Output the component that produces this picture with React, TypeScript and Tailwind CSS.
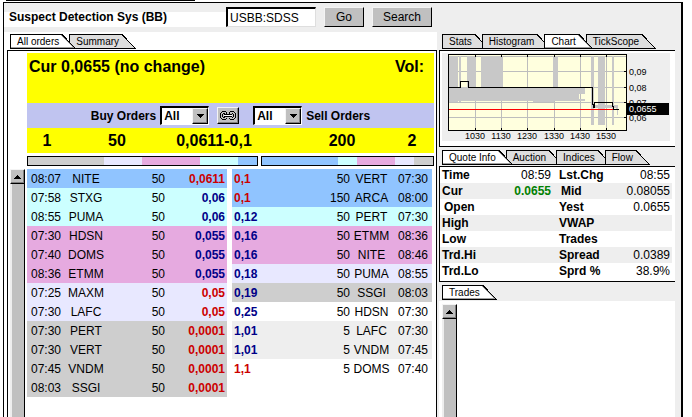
import { useState } from "react";
import clsx from "clsx";

type Order = { time: string; maker: string; size: number; price: string; row: string; down?: boolean };

const BLUE = "bg-[#90c4ff]";
const CYAN = "bg-[#ccffff]";
const PINK = "bg-[#e6aae0]";
const LILAC = "bg-[#e8e8ff]";
const GRAY = "bg-[#cecece]";
const LIGHT = "bg-[#eeeeee]";
const WHITE = "bg-white";

const BUY_ORDERS: Order[] = [
  { time: "08:07", maker: "NITE", size: 50, price: "0,0611", row: BLUE, down: true },
  { time: "07:58", maker: "STXG", size: 50, price: "0,06", row: CYAN },
  { time: "08:55", maker: "PUMA", size: 50, price: "0,06", row: CYAN },
  { time: "07:30", maker: "HDSN", size: 50, price: "0,055", row: PINK },
  { time: "07:40", maker: "DOMS", size: 50, price: "0,055", row: PINK },
  { time: "08:36", maker: "ETMM", size: 50, price: "0,055", row: PINK },
  { time: "07:25", maker: "MAXM", size: 50, price: "0,05", row: LILAC, down: true },
  { time: "07:30", maker: "LAFC", size: 50, price: "0,05", row: LILAC, down: true },
  { time: "07:30", maker: "PERT", size: 50, price: "0,0001", row: GRAY, down: true },
  { time: "07:30", maker: "VERT", size: 50, price: "0,0001", row: GRAY, down: true },
  { time: "07:45", maker: "VNDM", size: 50, price: "0,0001", row: GRAY, down: true },
  { time: "08:03", maker: "SSGI", size: 50, price: "0,0001", row: GRAY, down: true },
];

const SELL_ORDERS: Order[] = [
  { time: "07:30", maker: "VERT", size: 50, price: "0,1", row: BLUE, down: true },
  { time: "08:00", maker: "ARCA", size: 150, price: "0,1", row: BLUE, down: true },
  { time: "07:30", maker: "PERT", size: 50, price: "0,12", row: CYAN },
  { time: "08:36", maker: "ETMM", size: 50, price: "0,16", row: PINK },
  { time: "08:46", maker: "NITE", size: 50, price: "0,16", row: PINK },
  { time: "08:55", maker: "PUMA", size: 50, price: "0,18", row: LILAC },
  { time: "08:03", maker: "SSGI", size: 50, price: "0,19", row: GRAY },
  { time: "07:30", maker: "HDSN", size: 50, price: "0,25", row: WHITE },
  { time: "07:30", maker: "LAFC", size: 5, price: "1,01", row: LIGHT },
  { time: "07:45", maker: "VNDM", size: 5, price: "1,01", row: LIGHT },
  { time: "07:40", maker: "DOMS", size: 5, price: "1,1", row: WHITE, down: true },
];

const BUY_DEPTH = [
  { color: GRAY, weight: 4 },
  { color: LILAC, weight: 2 },
  { color: PINK, weight: 3 },
  { color: CYAN, weight: 2 },
  { color: BLUE, weight: 1 },
];

const SELL_DEPTH = [
  { color: BLUE, weight: 4 },
  { color: CYAN, weight: 1 },
  { color: PINK, weight: 2 },
  { color: LILAC, weight: 1 },
  { color: GRAY, weight: 1 },
];

const QUOTE_ROWS = [
  ["Time", "08:59", "Lst.Chg", "08:55"],
  ["Cur", "0.0655", "Mid", "0.08055"],
  ["Open", "", "Yest", "0.0655"],
  ["High", "", "VWAP", ""],
  ["Low", "", "Trades", ""],
  ["Trd.Hi", "", "Spread", "0.0389"],
  ["Trd.Lo", "", "Sprd %", "38.9%"],
];

const RAISED = "border border-t-[#f4f4f4] border-l-[#f4f4f4] border-r-black border-b-black bg-[#c0c0c0]";
const BEVEL = "shadow-[inset_-1px_-1px_0_#808080]";

// Tabs with a slanted right edge; each one tucks under or over its neighbour
function Tabs({ items, initial }: { items: string[]; initial: number }) {
  const [active, setActive] = useState(initial);
  return (
    <div className="isolate flex h-[15px]" role="tablist">
      {items.map((label, i) => (
        <button
          key={label}
          type="button"
          role="tab"
          aria-selected={i === active}
          onClick={() => setActive(i)}
          className={clsx("relative flex h-[15px] text-[10px] leading-[13px]", i > 0 && "-ml-[7px]", i === active && "z-10")}
        >
          <span
            className={clsx(
              "h-[15px] border-y border-l border-black pr-0.5 pl-1.5",
              i === active ? "bg-white shadow-[inset_0_-1px_0_#a0a0a0]" : "bg-[#dedede]",
            )}
          >
            {label}
          </span>
          <svg width="15" height="15" viewBox="0 0 15 15" shapeRendering="crispEdges" aria-hidden="true">
            <path d="M0 0H1L15 15H0Z" fill={i === active ? "#fff" : "#dedede"} />
            {i === active && <path d="M0 13.5H12.5L0.5 1.5" fill="none" stroke="#a0a0a0" />}
            <path d="M0 .5H1L14.5 14.5H0" fill="none" stroke="#000" />
          </svg>
        </button>
      ))}
    </div>
  );
}

function ScrollBar() {
  return (
    <div className="flex w-[15px] shrink-0 flex-col">
      <button type="button" aria-label="Scroll up" className={clsx("flex h-[15px] items-center justify-center", RAISED, BEVEL)}>
        <svg width="7" height="4" viewBox="0 0 7 4" shapeRendering="crispEdges" aria-hidden="true">
          <path d="M3 0h1v1h1v1h1v1h1v1H0V3h1V2h1V1h1z" />
        </svg>
      </button>
      <div className="grow border-r border-l-2 border-l-[#eeeeee] border-r-black bg-[#c0c0c0]" />
    </div>
  );
}

function FilterSelect({ label }: { label: string }) {
  return (
    <div className="relative h-[19px] w-[49px]">
      <select
        aria-label={label}
        className="h-full w-full appearance-none border-t-2 border-r border-b border-l-2 border-t-black border-r-white border-b-white border-l-black bg-white pl-0.5 text-xs leading-none font-bold"
      >
        <option>All</option>
      </select>
      <span
        className={clsx(
          "pointer-events-none absolute top-0.5 right-px bottom-px flex w-4 items-center justify-center",
          RAISED,
          BEVEL,
        )}
      >
        <svg width="7" height="4" viewBox="0 0 7 4" shapeRendering="crispEdges" aria-hidden="true">
          <path d="M0 0h7v1H6v1H5v1H4v1H3V3H2V2H1V1H0z" />
        </svg>
      </span>
    </div>
  );
}

function DepthBar({ segments }: { segments: { color: string; weight: number }[] }) {
  return (
    <div className="flex h-2.5 w-full border border-black">
      {segments.map((s) => (
        <div key={s.color} className={s.color} style={{ flexGrow: s.weight }} />
      ))}
    </div>
  );
}

function priceColor(o: Order) {
  return o.down ? "text-[#cc0000]" : "text-[#000088]";
}

function BuyTable() {
  return (
    <table className="w-1/2 table-fixed self-start" aria-label="Buy Orders">
      <tbody>
        {BUY_ORDERS.map((o) => (
          <tr key={o.time + o.maker} className={clsx("h-[19px]", o.row)}>
            <td className="w-[39px] pl-1">{o.time}</td>
            <td className="w-10 text-center">{o.maker}</td>
            <td className="text-right">{o.size}</td>
            <td className={clsx("w-[62px] pr-0.5 text-right font-bold", priceColor(o))}>{o.price}</td>
          </tr>
        ))}
      </tbody>
    </table>
  );
}

function SellTable() {
  return (
    <table className="w-1/2 table-fixed self-start" aria-label="Sell Orders">
      <tbody>
        {SELL_ORDERS.map((o) => (
          <tr key={o.time + o.maker} className={clsx("h-[19px]", o.row)}>
            <td className={clsx("w-[62px] pl-0.5 font-bold", priceColor(o))}>{o.price}</td>
            <td className="text-right">{o.size}</td>
            <td className="w-[43px] text-center">{o.maker}</td>
            <td className="w-[39px] pr-1 text-right">{o.time}</td>
          </tr>
        ))}
      </tbody>
    </table>
  );
}

function PriceChart() {
  return (
    <svg
      viewBox="0 0 228 88"
      className="block h-[88px] w-[228px] bg-[#eeeeee] text-[9px]"
      shapeRendering="crispEdges"
      role="img"
      aria-label="Price chart"
    >
      <rect x="6" y="1" width="179" height="76" fill="#ffffde" />
      <g stroke="#bdbdbd">
        <path d="M7 18.5h177M7 34.5h177M7 49.5h177M7 64.5h177M7 3.5h177" />
        <path d="M33.5 2v75M59.5 2v75M85.5 2v75M112.5 2v75M138.5 2v75M164.5 2v75" />
      </g>
      <g fill="#c8c8c8">
        <path d="M7 3h9v31h1V3h2v31h6V3h9v31h5V3h22v31h50V3h5v31h27v7h-6v5h6v2h-31v1H91v-1H19v1h-2v-1h-1v1H7z" />
        <path d="M149 3h3v69h-3zM156 3h7v69h-7zM170 3h2v69h-2zM152 52h23v3h-23zM174 52h2v10h-1z" />
      </g>
      <path d="M7 56.5h167" stroke="#ff0000" />
      <path d="M7 34.5h11.5v-6h8v6h124v17h1v3h1v-5h18v4h1v3h5" fill="none" stroke="#000" />
      <rect x="6.5" y="1.5" width="178" height="76" fill="none" stroke="#000" />
      <path
        d="M33.5 2v2M59.5 2v2M85.5 2v2M112.5 2v2M138.5 2v2M164.5 2v2M33.5 75v2M59.5 75v2M85.5 75v2M112.5 75v2M138.5 75v2M164.5 75v2M182 18.5h2M182 34.5h2M182 49.5h2M182 64.5h2"
        stroke="#000"
      />
      <g>
        <text x="187" y="22">0,09</text>
        <text x="187" y="38">0,08</text>
        <text x="187" y="53">0,07</text>
        <text x="187" y="68">0,06</text>
      </g>
      <rect x="185" y="50" width="42" height="12" />
      <text x="187" y="59" fill="#fff">
        0,0655
      </text>
      <g textAnchor="middle">
        <text x="33" y="86">1030</text>
        <text x="59" y="86">1130</text>
        <text x="85" y="86">1230</text>
        <text x="112" y="86">1330</text>
        <text x="138" y="86">1430</text>
        <text x="164" y="86">1530</text>
      </g>
    </svg>
  );
}

function QuoteTable() {
  return (
    <table className="w-full table-fixed leading-4">
      <tbody>
        {QUOTE_ROWS.map(([label, value, label2, value2], i) => (
          <tr key={label} className={clsx("h-4", i % 2 === 1 && LIGHT)}>
            <th className={clsx("w-[46px] text-left", label === "Open" ? "pl-1" : "pl-0.5")}>{label}</th>
            <td className={clsx("w-[65px] text-right", label === "Cur" && "font-bold text-[#008000]")}>{value}</td>
            <th className={clsx("w-[60px] text-left", label2 === "Mid" ? "pl-2.5" : "pl-2")}>{label2}</th>
            <td className="pr-0.5 text-right">{value2}</td>
          </tr>
        ))}
      </tbody>
    </table>
  );
}

export default function App() {
  return (
    <div className="flex min-h-screen flex-col bg-white pr-[9px] pl-[3px] font-['Liberation_Sans',Arial,sans-serif] text-xs text-black">
      <div className="ml-[3px] h-px w-[189px] bg-black" />
      <main className="mt-px flex grow flex-col border-t border-r-2 border-l border-black bg-[#eeeeee]">
        <form className="flex h-[29px] items-start pt-1" onSubmit={(e) => e.preventDefault()}>
          <label
            htmlFor="symbol"
            className="mt-[5px] h-[15px] w-[222px] bg-white pl-[5px] leading-[10px] font-bold whitespace-nowrap"
          >
            Suspect Detection Sys (BB)
          </label>
          <input
            id="symbol"
            defaultValue="USBB:SDSS"
            className="h-5 w-[90px] border-t-2 border-r border-b border-l-2 border-t-black border-r-[#dedede] border-b-[#dedede] border-l-black bg-white pl-0.5"
          />
          <button type="submit" className={clsx("ml-2 h-5 w-10", RAISED)}>
            Go
          </button>
          <button type="button" className={clsx("ml-2 h-5 w-[60px]", RAISED)}>
            Search
          </button>
        </form>

        <div className="flex grow">
          <section className="flex min-w-0 grow flex-col bg-white pl-[3px]">
            <div className="h-[18px] pt-0.5 pl-[3px]">
              <Tabs items={["All orders", "Summary"]} initial={0} />
            </div>
            <div className="flex grow flex-col border-t border-r border-l border-black pt-0.5 pr-0.5">
              <div className="ml-[19px]">
                <div className="flex h-[50px] justify-between bg-[#ffff00] px-0.5 pt-1 text-base leading-5 font-bold">
                  <h1>Cur 0,0655 (no change)</h1>
                  <span className="pr-2">Vol:</span>
                </div>
                <div className="flex h-[25px] items-center justify-center bg-[#c0c4f0] font-bold">
                  <span className="mr-1">Buy Orders</span>
                  <FilterSelect label="Buy orders filter" />
                  <button
                    type="button"
                    aria-label="Link filters"
                    className={clsx("mr-3.5 ml-2 flex h-[17px] w-[22px] items-center justify-center", RAISED, BEVEL)}
                  >
                    <svg width="16" height="11" viewBox="0 0 16 11" fill="none" shapeRendering="crispEdges" aria-hidden="true">
                      <path d="M6.5 3.5v-1l-1-1h-3l-2 2v4l2 2h3l1-1v-1M9.5 3.5v-1l1-1h3l2 2v4l-2 2h-3l-1-1v-1" stroke="#000" />
                      <path d="M4.5 3.5h-1l-1 1v2l1 1h1M11.5 3.5h1l1 1v2l-1 1h-1" stroke="#000" />
                      <path d="M4 5.5h8" stroke="#fff" />
                      <path d="M4 4.5h8M4 6.5h8" stroke="#000" />
                    </svg>
                  </button>
                  <FilterSelect label="Sell orders filter" />
                  <span className="ml-1">Sell Orders</span>
                </div>
                <div className="flex h-[25px] items-center bg-[#ffff00] pr-0.5 text-center text-base font-bold">
                  <span className="w-10">1</span>
                  <span className="w-[100px]">50</span>
                  <span className="w-[94px]">0,0611-0,1</span>
                  <span className="ml-auto w-[100px]">200</span>
                  <span className="w-10">2</span>
                </div>
                <div className="grid grid-cols-[4fr_3fr] gap-[3px] py-[3px]">
                  <DepthBar segments={BUY_DEPTH} />
                  <DepthBar segments={SELL_DEPTH} />
                </div>
              </div>
              <div className="flex grow pl-0.5">
                <ScrollBar />
                <div className="ml-0.5 flex min-w-0 grow gap-[5px] pr-0.5">
                  <BuyTable />
                  <SellTable />
                </div>
              </div>
            </div>
          </section>

          <aside className="flex w-[244px] shrink-0 flex-col pr-1.5 pl-0.5">
            <div className="h-[18px] pt-0.5 pl-[3px]">
              <Tabs items={["Stats", "Histogram", "Chart", "TickScope"]} initial={2} />
            </div>
            <div className="h-[97px] border-y border-l border-black bg-white pt-0.5 pl-0.5">
              <PriceChart />
            </div>
            <div className="mt-[3px] pl-[3px]">
              <Tabs items={["Quote Info", "Auction", "Indices", "Flow"]} initial={0} />
            </div>
            <div className="mt-px border-y border-l border-black bg-white pr-[3px] pb-0.5">
              <QuoteTable />
            </div>
            <div className="mt-[3px] pl-[3px]">
              <Tabs items={["Trades"]} initial={0} />
            </div>
            <div className="mt-px flex grow bg-white pt-[3px] pl-[3px]">
              <ScrollBar />
            </div>
          </aside>
        </div>
      </main>
    </div>
  );
}
